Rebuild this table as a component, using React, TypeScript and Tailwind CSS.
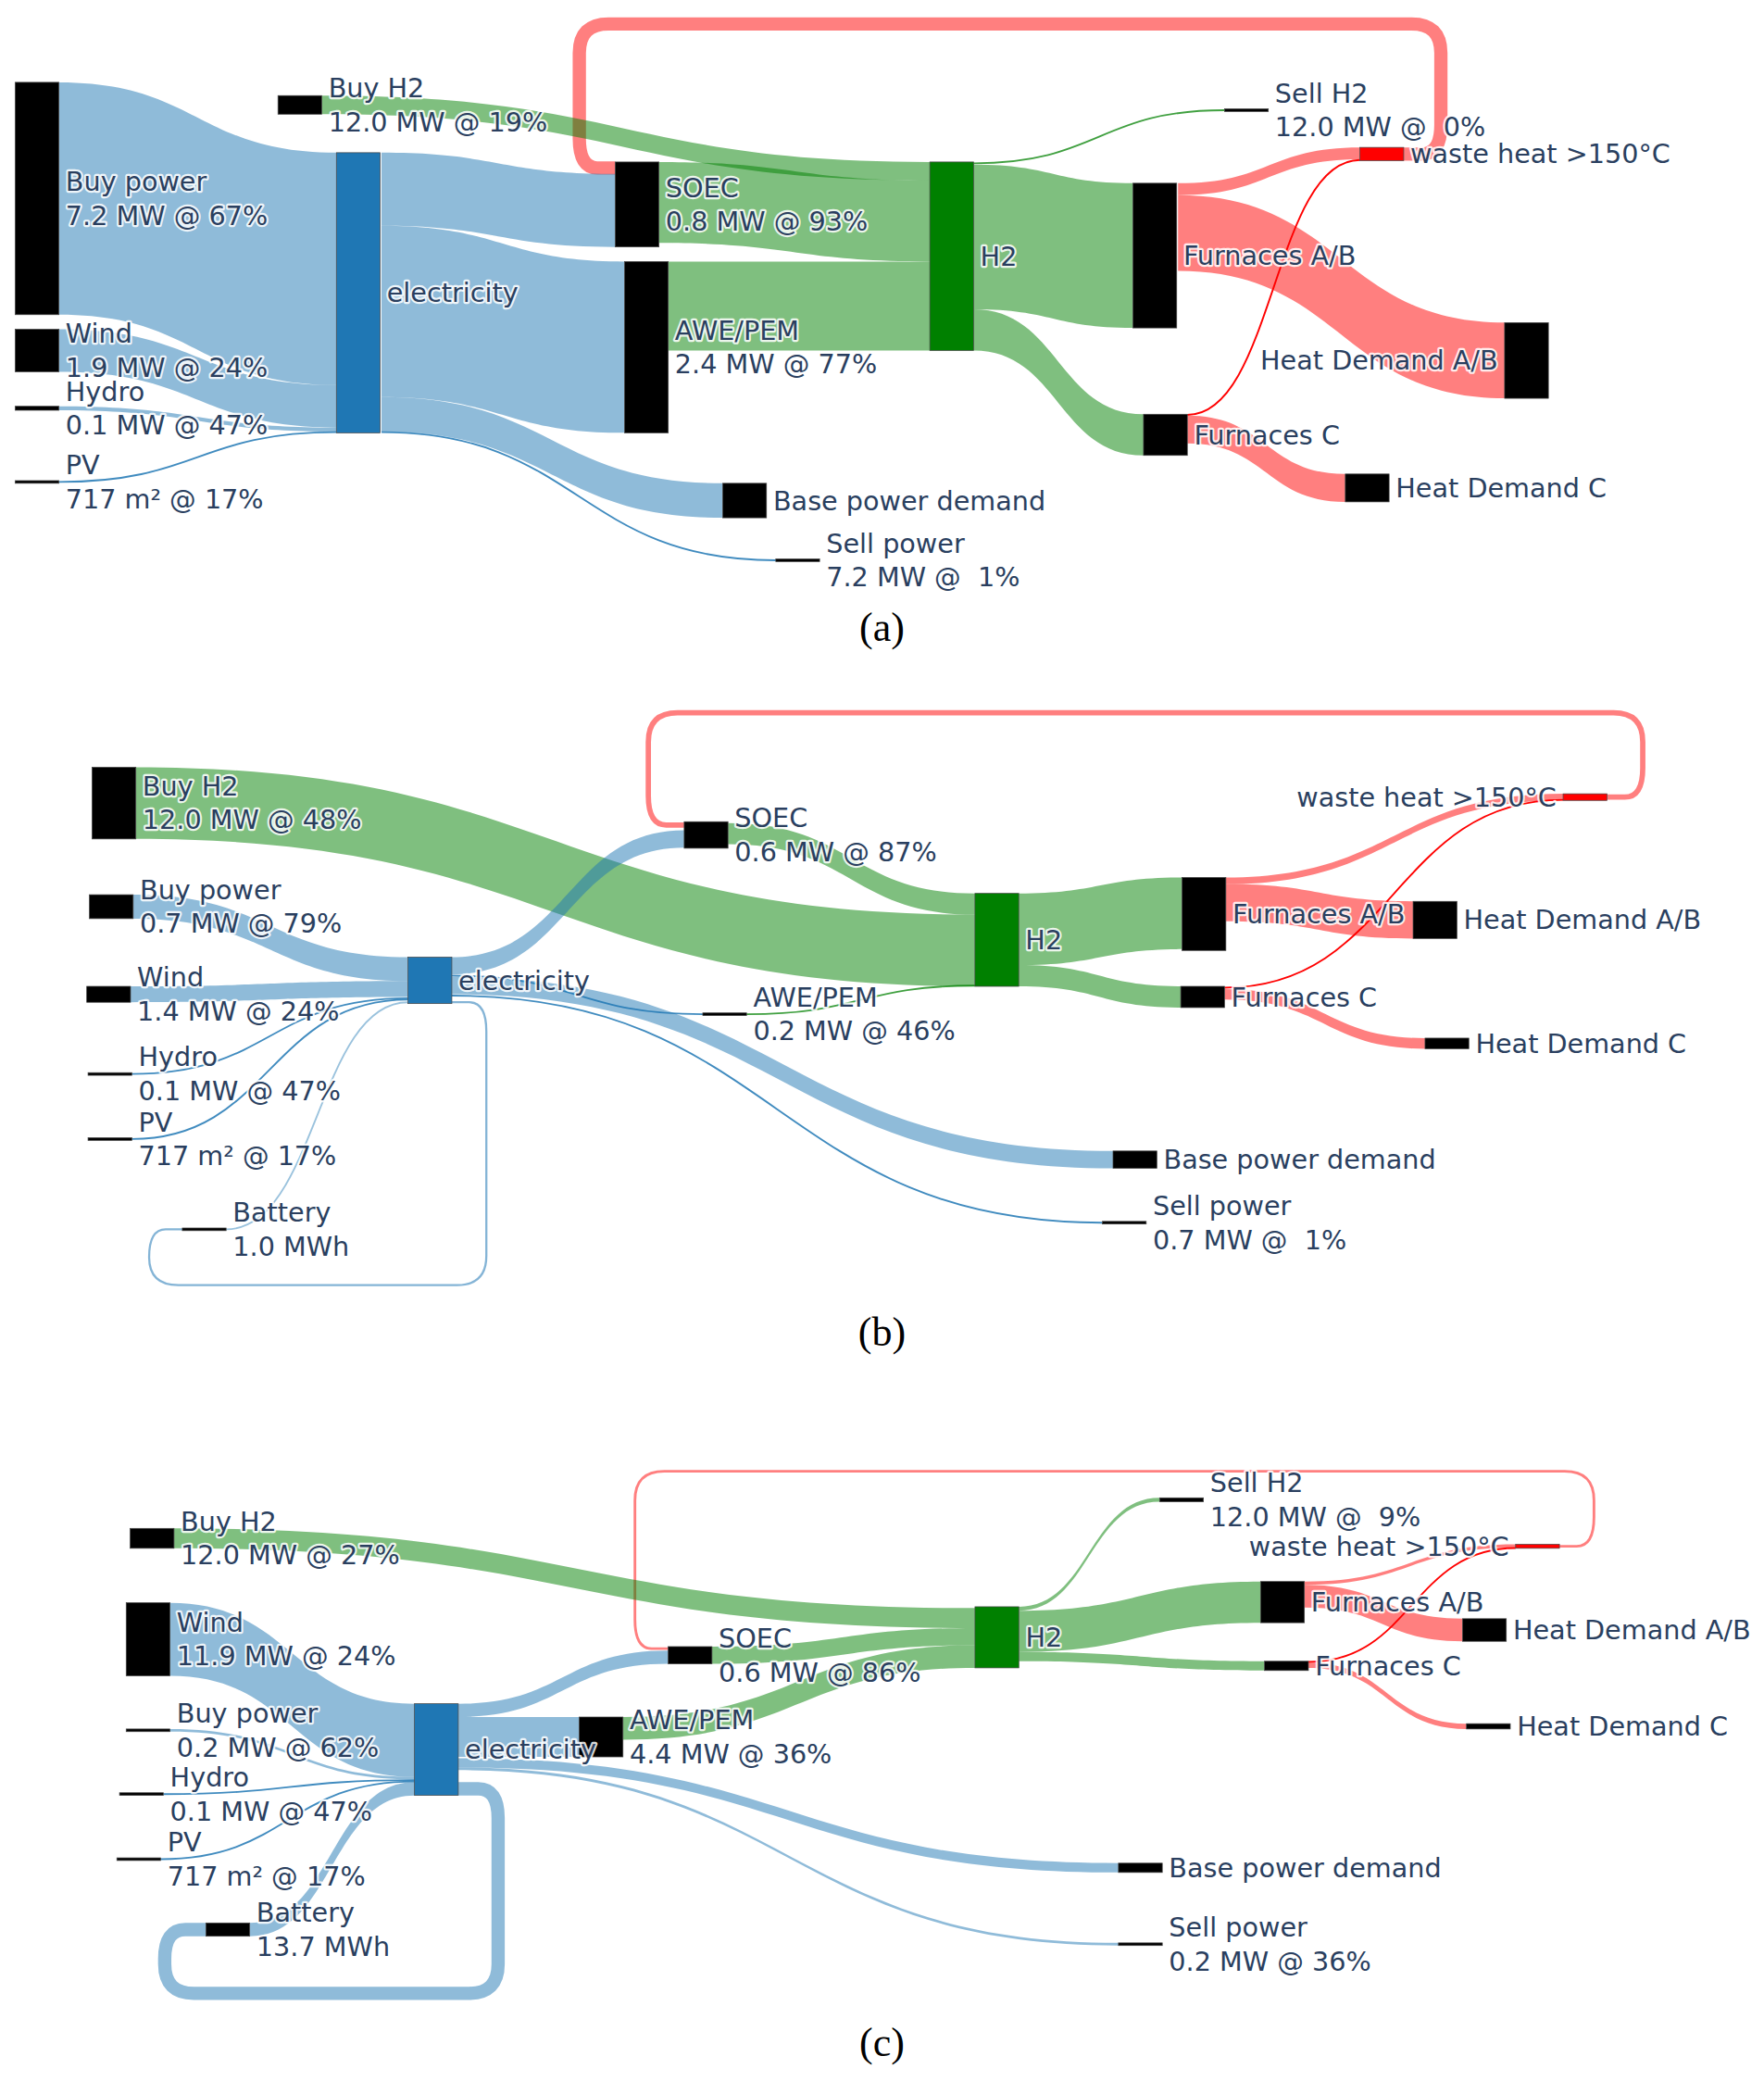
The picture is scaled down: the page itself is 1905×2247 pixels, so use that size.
type Node = { x: number; y0: number; y1: number; label: string[]; fill?: string; left?: boolean };
type Band = [number, number, number, number, number, number, string];
type Thin = [number, number, number, number, string];
type Loop = { pts: [number, number][]; w: number; c: string };

interface PanelData {
  y0: number;
  h: number;
  nodes: Node[];
  bands: Band[];
  thins: Thin[];
  loops: Loop[];
}

// drawing units -> page pixels
const VW = 1328;
const K = 1905 / VW;
const NW = 33;

const B = 'rgba(31,119,180,0.5)';
const G = 'rgba(0,128,0,0.5)';
const R = 'rgba(255,0,0,0.5)';
const TB = 'rgba(31,119,180,0.85)';
const TBL = 'rgba(31,119,180,0.45)';
const TG = 'rgba(0,128,0,0.75)';
const TR = '#ff0000';

const panelA: PanelData = {
  y0: 0,
  h: 452,
  nodes: [
    { x: 11, y0: 62, y1: 237, label: ['Buy power', '7.2 MW @ 67%'] },
    { x: 11, y0: 248, y1: 280, label: ['Wind', '1.9 MW @ 24%'] },
    { x: 11, y0: 306, y1: 309, label: ['Hydro', '0.1 MW @ 47%'] },
    { x: 11, y0: 362, y1: 364, label: ['PV', '717 m² @ 17%'] },
    { x: 209, y0: 72, y1: 86, label: ['Buy H2', '12.0 MW @ 19%'] },
    { x: 253, y0: 115, y1: 326, label: ['electricity'], fill: '#1f77b4' },
    { x: 463, y0: 122, y1: 186, label: ['SOEC', '0.8 MW @ 93%'] },
    { x: 470, y0: 197, y1: 326, label: ['AWE/PEM', '2.4 MW @ 77%'] },
    { x: 544, y0: 364, y1: 390, label: ['Base power demand'] },
    { x: 584, y0: 421, y1: 423, label: ['Sell power', '7.2 MW @  1%'] },
    { x: 700, y0: 122, y1: 264, label: ['H2'], fill: '#008000' },
    { x: 922, y0: 82, y1: 84, label: ['Sell H2', '12.0 MW @  0%'] },
    { x: 1024, y0: 111, y1: 121, label: ['waste heat >150°C'], fill: '#ff0000' },
    { x: 853, y0: 138, y1: 247, label: ['Furnaces A/B'] },
    { x: 861, y0: 312, y1: 343, label: ['Furnaces C'] },
    { x: 1133, y0: 243, y1: 300, label: ['Heat Demand A/B'], left: true },
    { x: 1013, y0: 357, y1: 378, label: ['Heat Demand C'] },
  ],
  bands: [
    [44, 62, 237, 253, 115, 290, B],
    [44, 248, 280, 253, 290, 322, B],
    [44, 306, 309, 253, 322, 325, B],
    [287, 115, 170, 463, 131, 186, B],
    [287, 170, 299, 470, 197, 326, B],
    [287, 299, 325, 544, 364, 390, B],
    [242, 72, 86, 700, 122, 136, G],
    [496, 122, 183, 700, 136, 197, G],
    [503, 197, 264, 700, 197, 264, G],
    [733, 124, 233, 853, 138, 247, G],
    [733, 233, 264, 861, 312, 343, G],
    [887, 138, 147, 1024, 111, 120, R],
    [887, 147, 204, 1133, 243, 300, R],
    [894, 313, 334, 1013, 357, 378, R],
  ],
  thins: [
    [44, 363, 253, 325.5, TB],
    [287, 325.5, 584, 422, TB],
    [733, 123, 922, 83, TG],
    [894, 312.5, 1024, 120.5, TR],
  ],
  loops: [
    { pts: [[1057, 116], [1085, 116], [1085, 18], [436, 18], [436, 126.5], [463, 126.5]], w: 10, c: R },
  ],
};

const panelB: PanelData = {
  y0: 494,
  h: 491,
  nodes: [
    { x: 69, y0: 578, y1: 632, label: ['Buy H2', '12.0 MW @ 48%'] },
    { x: 67, y0: 674, y1: 692, label: ['Buy power', '0.7 MW @ 79%'] },
    { x: 65, y0: 743, y1: 755, label: ['Wind', '1.4 MW @ 24%'] },
    { x: 66, y0: 808, y1: 810, label: ['Hydro', '0.1 MW @ 47%'] },
    { x: 66, y0: 857, y1: 859, label: ['PV', '717 m² @ 17%'] },
    { x: 137, y0: 925, y1: 927, label: ['Battery', '1.0 MWh'] },
    { x: 307, y0: 721, y1: 756, label: ['electricity'], fill: '#1f77b4' },
    { x: 515, y0: 619, y1: 639, label: ['SOEC', '0.6 MW @ 87%'] },
    { x: 529, y0: 763, y1: 765, label: ['AWE/PEM', '0.2 MW @ 46%'] },
    { x: 734, y0: 673, y1: 743, label: ['H2'], fill: '#008000' },
    { x: 890, y0: 661, y1: 716, label: ['Furnaces A/B'] },
    { x: 889, y0: 743, y1: 759, label: ['Furnaces C'] },
    { x: 1177, y0: 598, y1: 603, label: ['waste heat >150°C'], fill: '#ff0000', left: true },
    { x: 1064, y0: 679, y1: 707, label: ['Heat Demand A/B'] },
    { x: 1073, y0: 782, y1: 790, label: ['Heat Demand C'] },
    { x: 838, y0: 867, y1: 880, label: ['Base power demand'] },
    { x: 830, y0: 920, y1: 922, label: ['Sell power', '0.7 MW @  1%'] },
  ],
  bands: [
    [102, 578, 632, 734, 689, 743, G],
    [100, 674, 692, 307, 721, 739, B],
    [98, 743, 755, 307, 739, 751, B],
    [340, 721, 734, 515, 625.5, 638.5, B],
    [340, 736, 749, 838, 867, 880, B],
    [548, 620, 636, 734, 673, 689, G],
    [767, 673, 727, 890, 661, 715, G],
    [767, 727, 743, 889, 743, 759, G],
    [923, 661, 666, 1177, 598, 603, R],
    [923, 666, 694, 1064, 679, 707, R],
    [922, 745, 753, 1073, 782, 790, R],
  ],
  thins: [
    [99, 809, 307, 752, TB],
    [99, 858, 307, 753, TB],
    [170, 926, 307, 755, TBL],
    [340, 735, 529, 764, TB],
    [340, 750, 830, 921, TB],
    [562, 764, 734, 742.5, TG],
    [922, 744, 1177, 602.5, TR],
  ],
  loops: [
    { pts: [[340, 755], [366, 755], [366, 968], [112, 968], [112, 926], [137, 926]], w: 1.6, c: 'rgba(31,119,180,0.55)' },
    { pts: [[1210, 600.5], [1237, 600.5], [1237, 537], [488, 537], [488, 621.5], [515, 621.5]], w: 4, c: R },
  ],
};

const panelC: PanelData = {
  y0: 1022,
  h: 496,
  nodes: [
    { x: 98, y0: 1151, y1: 1166, label: ['Buy H2', '12.0 MW @ 27%'] },
    { x: 95, y0: 1207, y1: 1262, label: ['Wind', '11.9 MW @ 24%'] },
    { x: 95, y0: 1302, y1: 1304, label: ['Buy power', '0.2 MW @ 62%'] },
    { x: 90, y0: 1350, y1: 1352, label: ['Hydro', '0.1 MW @ 47%'] },
    { x: 88, y0: 1399, y1: 1401, label: ['PV', '717 m² @ 17%'] },
    { x: 155, y0: 1448, y1: 1458, label: ['Battery', '13.7 MWh'] },
    { x: 312, y0: 1283, y1: 1352, label: ['electricity'], fill: '#1f77b4' },
    { x: 503, y0: 1240, y1: 1253, label: ['SOEC', '0.6 MW @ 86%'] },
    { x: 436, y0: 1293, y1: 1323, label: ['AWE/PEM', '4.4 MW @ 36%'] },
    { x: 734, y0: 1210, y1: 1256, label: ['H2'], fill: '#008000' },
    { x: 873, y0: 1128, y1: 1131, label: ['Sell H2', '12.0 MW @  9%'] },
    { x: 1141, y0: 1163, y1: 1166, label: ['waste heat >150°C'], fill: '#ff0000', left: true },
    { x: 949, y0: 1191, y1: 1222, label: ['Furnaces A/B'] },
    { x: 952, y0: 1251, y1: 1258, label: ['Furnaces C'] },
    { x: 1101, y0: 1219, y1: 1236, label: ['Heat Demand A/B'] },
    { x: 1104, y0: 1298, y1: 1302, label: ['Heat Demand C'] },
    { x: 842, y0: 1403, y1: 1410, label: ['Base power demand'] },
    { x: 842, y0: 1463, y1: 1465, label: ['Sell power', '0.2 MW @ 36%'] },
  ],
  bands: [
    [131, 1151, 1166, 734, 1211, 1226, G],
    [128, 1207, 1262, 312, 1283, 1338, B],
    [128, 1302, 1304, 312, 1338, 1340, B],
    [188, 1448, 1458, 312, 1342, 1352, B],
    [345, 1283, 1293, 503, 1243, 1253, B],
    [345, 1293, 1323, 436, 1293, 1323, B],
    [345, 1324, 1331, 842, 1403, 1410, B],
    [345, 1331, 1333, 842, 1463, 1465, B],
    [536, 1240, 1253, 734, 1226, 1239, G],
    [469, 1293, 1310, 734, 1239, 1256, G],
    [767, 1210, 1213, 873, 1128, 1131, G],
    [767, 1213, 1244, 949, 1191, 1222, G],
    [767, 1244, 1251, 952, 1251, 1258, G],
    [982, 1191, 1193.5, 1141, 1163, 1165.5, R],
    [982, 1193.5, 1210.5, 1101, 1219, 1236, R],
    [985, 1252, 1256, 1104, 1298, 1302, R],
  ],
  thins: [
    [123, 1351, 312, 1340.5, TB],
    [121, 1400, 312, 1341.5, TB],
    [985, 1251.5, 1141, 1165.8, TR],
  ],
  loops: [
    { pts: [[345, 1347], [375, 1347], [375, 1501], [124, 1501], [124, 1453], [155, 1453]], w: 10, c: B },
    { pts: [[1174, 1164.5], [1200, 1164.5], [1200, 1108], [478, 1108], [478, 1241.5], [503, 1241.5]], w: 2, c: R },
  ],
};

function bandPath([x0, a0, a1, x1, b0, b1]: Band) {
  const xm = (x0 + x1) / 2;
  return `M${x0},${a0} C${xm},${a0} ${xm},${b0} ${x1},${b0} L${x1},${b1} C${xm},${b1} ${xm},${a1} ${x0},${a1} Z`;
}

function thinPath([x0, a, x1, b]: Thin) {
  const xm = (x0 + x1) / 2;
  return `M${x0},${a} C${xm},${a} ${xm},${b} ${x1},${b}`;
}

// polyline with rounded corners, used for the circular links
function roundedPath(pts: [number, number][], r: number) {
  let d = `M${pts[0][0]},${pts[0][1]}`;
  for (let i = 1; i < pts.length - 1; i++) {
    const [px, py] = pts[i - 1];
    const [cx, cy] = pts[i];
    const [nx, ny] = pts[i + 1];
    const l1 = Math.hypot(cx - px, cy - py);
    const l2 = Math.hypot(nx - cx, ny - cy);
    const r1 = Math.min(r, l1 / 2);
    const r2 = Math.min(r, l2 / 2);
    const ax = cx - ((cx - px) / l1) * r1;
    const ay = cy - ((cy - py) / l1) * r1;
    const bx = cx + ((nx - cx) / l2) * r2;
    const by = cy + ((ny - cy) / l2) * r2;
    d += ` L${ax},${ay} Q${cx},${cy} ${bx},${by}`;
  }
  const last = pts[pts.length - 1];
  return d + ` L${last[0]},${last[1]}`;
}

function NodeLabel({ n }: { n: Node }) {
  const cy = (n.y0 + n.y1) / 2;
  const lh = 25.5;
  const start = cy - ((n.label.length - 1) * lh) / 2;
  const x = n.left ? n.x - 5 : n.x + NW + 5;
  return (
    <text
      x={x}
      textAnchor={n.left ? 'end' : 'start'}
      fontSize={20}
      fill="#2a3f5f"
      stroke="#ffffff"
      strokeWidth={3}
      strokeOpacity={0.85}
      strokeLinejoin="round"
      paintOrder="stroke"
      xmlSpace="preserve"
      className="whitespace-pre font-['DejaVu_Sans',sans-serif]"
    >
      {n.label.map((t, i) => (
        <tspan key={i} x={x} y={start + i * lh + 7}>
          {t}
        </tspan>
      ))}
    </text>
  );
}

function Sankey({ d }: { d: PanelData }) {
  return (
    <svg
      width={1905}
      height={Math.round(d.h * K)}
      viewBox={`0 ${d.y0} ${VW} ${d.h}`}
      className="block shrink-0"
    >
      {d.loops.map((l, i) => (
        <path key={'l' + i} d={roundedPath(l.pts, 22)} fill="none" stroke={l.c} strokeWidth={l.w} />
      ))}
      {d.bands.map((b, i) => (
        <path key={'b' + i} d={bandPath(b)} fill={b[6]} />
      ))}
      {d.thins.map((t, i) => (
        <path key={'t' + i} d={thinPath(t)} fill="none" stroke={t[4]} strokeWidth={1.3} />
      ))}
      {d.nodes.map((n, i) => (
        <rect
          key={'n' + i}
          x={n.x}
          y={n.y0}
          width={NW}
          height={Math.max(n.y1 - n.y0, 1.6)}
          fill={n.fill ?? '#000000'}
          stroke="#444444"
          strokeWidth={0.5}
        />
      ))}
      {d.nodes.map((n, i) => (
        <NodeLabel key={'x' + i} n={n} />
      ))}
    </svg>
  );
}

function Caption({ text, h }: { text: string; h: string }) {
  return (
    <div className={`${h} flex items-center justify-center font-['Liberation_Serif',serif] text-[44px] leading-none text-black`}>
      {text}
    </div>
  );
}

export default function App() {
  return (
    <div className="w-[1905px] h-[2247px] bg-white flex flex-col overflow-hidden">
      <Sankey d={panelA} />
      <Caption text="(a)" h="h-[60px]" />
      <Sankey d={panelB} />
      <Caption text="(b)" h="h-[53px]" />
      <Sankey d={panelC} />
      <Caption text="(c)" h="h-[57px]" />
    </div>
  );
}
